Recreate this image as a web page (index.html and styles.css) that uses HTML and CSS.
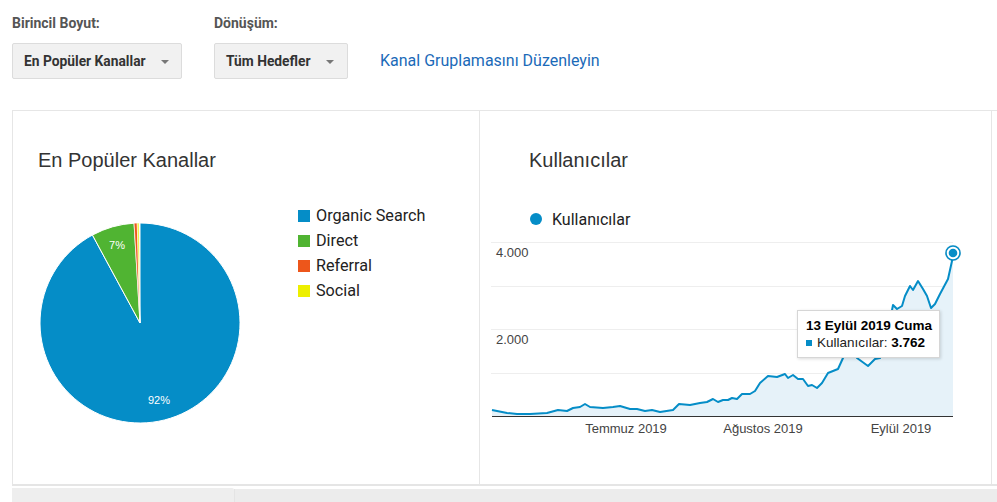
FILE: index.html
```html
<!DOCTYPE html>
<html lang="tr">
<head>
<meta charset="utf-8">
<title>Kanallar</title>
<link rel="stylesheet" href="styles.css">
</head>
<body>
<div class="filters">
  <div class="field">
    <div class="field-label">Birincil Boyut:</div>
    <div class="select select-wide"><span>En Popüler Kanallar</span><i class="caret"></i></div>
  </div>
  <div class="field">
    <div class="field-label">Dönüşüm:</div>
    <div class="select select-narrow"><span>Tüm Hedefler</span><i class="caret"></i></div>
  </div>
  <a class="edit-link" href="#">Kanal Gruplamasını Düzenleyin</a>
</div>

<div class="board">
  <section class="panel panel-left">
    <h2 class="panel-title">En Popüler Kanallar</h2>
    <div class="pie-row">
      <svg class="pie" width="200" height="200" viewBox="0 0 200 200">
        <path d="M100 100 L100 0 A100 100 0 1 1 52.44 12.04 Z" fill="#058dc7" stroke="#fff" stroke-width="1"/>
        <path d="M100 100 L52.44 12.04 A100 100 0 0 1 94.07 0.18 Z" fill="#50b432" stroke="#fff" stroke-width="1"/>
        <path d="M100 100 L94.07 0.18 A100 100 0 0 1 97.21 0.04 Z" fill="#ed561b" stroke="#fff" stroke-width="0.6"/>
        <path d="M100 100 L97.21 0.04 A100 100 0 0 1 98.95 0.01 Z" fill="#edef00" stroke="#fff" stroke-width="0.6"/>
        <text x="77" y="26" class="pie-label">7%</text>
        <text x="119" y="181" class="pie-label">92%</text>
      </svg>
      <ul class="legend">
        <li><i class="sw sw-blue"></i>Organic Search</li>
        <li><i class="sw sw-green"></i>Direct</li>
        <li><i class="sw sw-red"></i>Referral</li>
        <li><i class="sw sw-yellow"></i>Social</li>
      </ul>
    </div>
  </section>

  <section class="panel panel-right">
    <h2 class="panel-title">Kullanıcılar</h2>
    <div class="series-legend"><i class="dot"></i>Kullanıcılar</div>
    <div class="chart">
      <svg width="500" height="205" viewBox="480 235 500 205">
        <g stroke="#eeeeee" stroke-width="1">
          <line x1="491" y1="241.5" x2="953" y2="241.5"/>
          <line x1="491" y1="285.5" x2="953" y2="285.5"/>
          <line x1="491" y1="328.5" x2="953" y2="328.5"/>
          <line x1="491" y1="372.5" x2="953" y2="372.5"/>
        </g>
        <polygon fill="#e6f2f9" points="492,409 497,410 507,412 517,413 530,413 547,412 558,409 567,410 573,407 580,406 585,403 590,406 603,407 613,406 620,405 630,408 637,408 645,410 652,409 660,411 673,409 679,403 690,404 700,402 707,401 713,398 718,401 723,399 728,399 732,397 737,398 742,393 750,393 755,390 760,382 768,375 777,376 785,373 788,377 793,374 798,378 803,378 808,385 812,384 817,387 822,382 828,372 833,370 838,368 843,357 850,345 857,357 868,365 875,358 880,357 885,345 889,325 893,304 897,308 902,305 905,295 910,285 913,289 918,280 923,288 927,295 931,307 935,303 940,293 948,278 952,260 953,252 953,415 492,415"/>
        <polyline fill="none" stroke="#058dc7" stroke-width="2" stroke-linejoin="round" points="492,409 497,410 507,412 517,413 530,413 547,412 558,409 567,410 573,407 580,406 585,403 590,406 603,407 613,406 620,405 630,408 637,408 645,410 652,409 660,411 673,409 679,403 690,404 700,402 707,401 713,398 718,401 723,399 728,399 732,397 737,398 742,393 750,393 755,390 760,382 768,375 777,376 785,373 788,377 793,374 798,378 803,378 808,385 812,384 817,387 822,382 828,372 833,370 838,368 843,357 850,345 857,357 868,365 875,358 880,357 885,345 889,325 893,304 897,308 902,305 905,295 910,285 913,289 918,280 923,288 927,295 931,307 935,303 940,293 948,278 952,260 953,252"/>
        <line x1="492" y1="415.5" x2="953" y2="415.5" stroke="#333" stroke-width="1"/>
        <text x="496" y="256" class="axis">4.000</text>
        <text x="496" y="343" class="axis">2.000</text>
        <text x="626" y="432" class="axis" text-anchor="middle">Temmuz 2019</text>
        <text x="763" y="432" class="axis" text-anchor="middle">Ağustos 2019</text>
        <text x="901" y="432" class="axis" text-anchor="middle">Eylül 2019</text>
        <circle cx="953" cy="252" r="8" fill="rgba(0,0,0,0.08)"/>
        <circle cx="953" cy="252" r="7" fill="#fff" stroke="#058dc7" stroke-width="1.6"/>
        <circle cx="953" cy="252" r="4.3" fill="#058dc7"/>
      </svg>
      <div class="tooltip">
        <div class="tip-date">13 Eylül 2019 Cuma</div>
        <div class="tip-row"><i class="tip-sq"></i>Kullanıcılar: <b>3.762</b></div>
      </div>
    </div>
  </section>
  <div class="panel-rest"></div>
</div>

<div class="tabs">
  <div class="tab tab-active"></div>
  <div class="tab tab-other"></div>
</div>
</body>
</html>
```

FILE: styles.css
```css
* { box-sizing: border-box; }
html, body { margin: 0; padding: 0; background: #fff; }
body {
  width: 997px;
  height: 502px;
  overflow: hidden;
  font-family: Roboto, "Liberation Sans", Arial, sans-serif;
  color: #333;
}

.filters {
  display: flex;
  align-items: flex-end;
  gap: 32px;
  padding: 14px 0 0 12px;
  height: 110px;
}
.field {
  display: flex;
  flex-direction: column;
  gap: 12px;
  margin-bottom: 31px;
}
.field-label {
  font-size: 14px;
  line-height: 16px;
  font-weight: 700;
  color: #555;
}
.select {
  display: flex;
  align-items: center;
  height: 36px;
  padding: 0 12px 0 11px;
  background: #f1f1f1;
  border: 1px solid #dcdcdc;
  border-radius: 2px;
  font-size: 13.8px;
  font-weight: 700;
  color: #333;
}
.select-wide { width: 170px; }
.select-narrow { width: 134px; padding-right: 13px; }
.caret {
  margin-left: auto;
  width: 0;
  height: 0;
  border-left: 4px solid transparent;
  border-right: 4px solid transparent;
  border-top: 4px solid #777;
  margin-top: 2px;
}
.edit-link {
  font-size: 16px;
  line-height: 36px;
  color: #1b6ab8;
  text-decoration: none;
  margin-bottom: 31px;
}

.board {
  display: flex;
  margin-left: 12px;
  height: 376px;
  border-top: 1px solid #e6e6e6;
  border-left: 1px solid #e6e6e6;
  border-bottom: 2px solid #e5e5e5;
}
.panel {
  height: 100%;
  border-right: 1px solid #e6e6e6;
  padding-top: 37px;
}
.panel-left { width: 467px; padding-left: 25px; }
.panel-right { width: 512px; }
.panel-rest { flex: 1; }

.panel-title {
  margin: 0;
  font-family: "Liberation Sans", Arial, sans-serif;
  font-weight: 400;
  font-size: 20px;
  line-height: 24px;
  color: #333;
}
.panel-right .panel-title { padding-left: 49px; }

.pie-row {
  display: flex;
  align-items: flex-start;
  margin-top: 31px;
}
.pie { display: block; margin: 20px 0 0 2px; }
.pie-label {
  font-family: "Liberation Sans", Arial, sans-serif;
  font-size: 11px;
  fill: #fff;
  text-anchor: middle;
}
.legend {
  list-style: none;
  margin: 0 0 0 58px;
  padding: 0;
}
.legend li {
  display: flex;
  align-items: center;
  height: 25px;
  font-size: 16.2px;
  color: #222;
}
.sw { width: 12px; height: 12px; margin-right: 6px; display: inline-block; }
.sw-blue { background: #058dc7; }
.sw-green { background: #50b432; }
.sw-red { background: #ed561b; }
.sw-yellow { background: #edef00; }

.series-legend {
  display: flex;
  align-items: center;
  margin: 35px 0 0 50px;
  height: 24px;
  font-size: 16px;
  color: #222;
}
.dot {
  width: 12px;
  height: 12px;
  border-radius: 50%;
  background: #058dc7;
  margin-right: 10px;
}

.chart {
  position: relative;
  margin-top: 5px;
  width: 500px;
  height: 205px;
}
.chart svg { display: block; }
.axis {
  font-family: "Liberation Sans", Arial, sans-serif;
  font-size: 13px;
  fill: #444;
}
.tooltip {
  position: absolute;
  left: 317px;
  top: 74px;
  width: 143px;
  height: 48px;
  background: #fff;
  border: 1px solid #d6d6d6;
  box-shadow: 1px 1px 3px rgba(0,0,0,0.15);
  padding: 6px 0 0 8px;
  font-family: "Liberation Sans", Arial, sans-serif;
  font-size: 13.5px;
  color: #000;
  line-height: 17px;
}
.tip-date { font-weight: 700; }
.tip-row { display: flex; align-items: center; white-space: pre; color: #222; }
.tip-row b { color: #000; }
.tip-sq {
  width: 6px;
  height: 6px;
  background: #058dc7;
  margin-right: 5px;
}

.tabs {
  display: flex;
  margin: 2px 0 0 12px;
  height: 20px;
}
.tab-active {
  width: 222px;
  background: #eeeeee;
  border-top-right-radius: 2px;
}
.tab-other {
  flex: 1;
  margin-top: 1px;
  background: #ececec;
  border-left: 1px solid #e4e4e4;
}
```
